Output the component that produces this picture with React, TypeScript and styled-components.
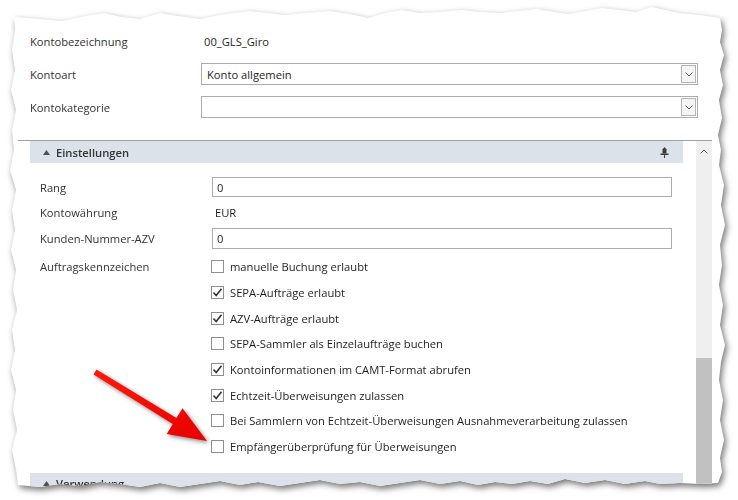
import React from 'react';
import styled, {createGlobalStyle} from 'styled-components';

const GlobalStyle = createGlobalStyle`
    html, body {
        margin: 0;
        padding: 0;
        background: #ffffff;
    }
    body {
        font-family: "Open Sans", "Liberation Sans", sans-serif;
        font-size: 11.2px;
        color: #333333;
    }
`;

// jagged "torn paper" outline, clockwise from top left
const EDGE = [
    [14, 17], [40, 19], [62, 21], [85, 16], [104, 13], [122, 17], [140, 19], [160, 13], [178, 16], [200, 19],
    [225, 14], [250, 11], [268, 13], [285, 15], [305, 13], [330, 11], [350, 14], [368, 18], [385, 13], [402, 10],
    [420, 13], [440, 12], [462, 10], [480, 12], [500, 13], [518, 11], [537, 9], [555, 12], [568, 14], [585, 11],
    [602, 8], [620, 10], [636, 12], [652, 7], [665, 10], [680, 13], [700, 15], [720, 18],
    [722, 30], [720, 42], [724, 55], [720, 70], [723, 85], [719, 100], [722, 118], [718, 135], [721, 150],
    [719, 165], [724, 185], [721, 205], [725, 225], [720, 245], [722, 265], [719, 285], [723, 305], [720, 325],
    [725, 345], [721, 362], [719, 380], [723, 400], [720, 420], [724, 440], [720, 458], [722, 472], [718, 483],
    [700, 484], [680, 483], [660, 484], [645, 481], [625, 484], [605, 480], [585, 483], [565, 479], [548, 484],
    [530, 481], [512, 484], [495, 482], [478, 485], [460, 481], [440, 484], [420, 480], [400, 483], [380, 486],
    [360, 482], [340, 484], [320, 480], [300, 483], [280, 486], [258, 482], [240, 485], [220, 481], [200, 484],
    [180, 487], [160, 483], [140, 487], [120, 484], [100, 482], [80, 486], [60, 484], [40, 487], [18, 485],
    [16, 470], [12, 450], [17, 430], [13, 410], [16, 390], [11, 370], [15, 350], [12, 330], [17, 310],
    [13, 290], [16, 270], [11, 250], [15, 230], [12, 210], [16, 190], [10, 170], [14, 150], [12, 130],
    [16, 110], [11, 90], [15, 70], [12, 50], [15, 30],
].map(([x, y]) => `${x}px ${y}px`).join(', ');

const Page = styled.div`
    position: relative;
    width: 738px;
    height: 500px;
    overflow: hidden;
`;

const PaperShadow = styled.div`
    width: 100%;
    height: 100%;
    filter: drop-shadow(2px 3px 3px rgba(0, 0, 0, 0.55));
`;

const Paper = styled.div`
    width: 100%;
    height: 100%;
    background: #ffffff;
    clip-path: polygon(${EDGE});
    display: flex;
    flex-direction: column;
`;

const TopForm = styled.div`
    display: grid;
    grid-template-columns: 171px 497px;
    grid-auto-rows: 22px;
    row-gap: 11px;
    padding: 30px 0 0 30px;
    height: 110px;
`;

const Label = styled.div`
    display: flex;
    align-items: center;
    color: #333333;
    white-space: nowrap;
`;

const StaticValue = styled.div`
    display: flex;
    align-items: center;
    padding-left: 3px;
    color: #1e1e1e;
`;

const Select = styled.div`
    display: flex;
    align-items: center;
    border: 1px solid #acacac;
    padding-left: 5px;
    color: #1e1e1e;
`;

const SelectText = styled.span`
    flex: 1;
`;

const DropButton = styled.div`
    width: 13px;
    height: 16px;
    margin-right: 1px;
    border: 1px solid #b4b4b4;
    background: #f4f4f4;
    display: flex;
    align-items: center;
    justify-content: center;
`;

const Separator = styled.div`
    margin: 0 26px 0 18px;
    border-top: 1px solid #a0a0a0;
`;

const Body = styled.div`
    flex: 1;
    display: flex;
    margin: 0 26px 0 18px;
    min-height: 0;
`;

const ScrollContent = styled.div`
    flex: 1;
    padding: 0 13px 0 12px;
    overflow: hidden;
`;

const SectionHeader = styled.div`
    height: 22px;
    background: #dbe2e9;
    display: flex;
    align-items: center;
    padding: 0 14px 0 13px;
    font-weight: 600;
    color: #333333;
`;

const HeaderTitle = styled.span`
    flex: 1;
    margin-left: 6px;
`;

const Settings = styled.div`
    display: grid;
    grid-template-columns: 172px 460px;
    padding: 14px 0 13px 10px;
`;

const TextBox = styled.div<{$h: number}>`
    height: ${p => p.$h}px;
    box-sizing: border-box;
    border: 1px solid #acacac;
    display: flex;
    align-items: center;
    padding-left: 4px;
    color: #1e1e1e;
`;

const PlainRow = styled.div<{$h: number}>`
    height: ${p => p.$h}px;
    display: flex;
    align-items: center;
`;

const CheckList = styled.div`
    display: flex;
    flex-direction: column;
    margin-top: 5px;
`;

const KennLabel = styled(Label)`
    align-items: flex-start;
    margin-top: 5px;
    height: 25.7px;
    line-height: 25.7px;
`;

const CheckRow = styled.label`
    height: 25.7px;
    display: flex;
    align-items: center;
    gap: 6px;
    color: #1e1e1e;
    white-space: nowrap;
`;

const Box = styled.span`
    width: 13px;
    height: 13px;
    box-sizing: border-box;
    border: 1px solid #8e8e8e;
    background: #ffffff;
    margin-left: -1px;
    display: flex;
    align-items: center;
    justify-content: center;
`;

const ScrollBar = styled.div`
    width: 16px;
    background: #efefef;
    display: flex;
    flex-direction: column;
`;

const ScrollArrow = styled.div`
    height: 20px;
    display: flex;
    align-items: center;
    justify-content: center;
`;

const ScrollThumb = styled.div`
    margin-top: 197px;
    flex: 1;
    background: #c1c1c1;
`;

const ArrowLayer = styled.svg`
    position: absolute;
    left: 0;
    top: 0;
    pointer-events: none;
    filter: drop-shadow(2px 2px 2px rgba(0, 0, 0, 0.45));
`;

const Chevron = ({up}: {up?: boolean}) => (
    <svg width="8" height="5" viewBox="0 0 8 5">
        <path d={up ? 'M0.5 4.5 L4 1 L7.5 4.5' : 'M0.5 0.5 L4 4 L7.5 0.5'} fill="none" stroke="#5a5a5a" strokeWidth="1"/>
    </svg>
);

const Check = () => (
    <svg width="11" height="11" viewBox="0 0 11 11">
        <path d="M1.5 5.5 L4.2 8.5 L9.5 1.8" fill="none" stroke="#333333" strokeWidth="1.6"/>
    </svg>
);

const PinIcon = () => (
    <svg width="9" height="11" viewBox="0 0 9 11">
        <path d="M4.5 0 L7 3 L2 3 Z" fill="#3c3c3c"/>
        <rect x="2.5" y="3" width="4" height="3.5" fill="#3c3c3c"/>
        <rect x="0.5" y="6.5" width="8" height="1.5" fill="#3c3c3c"/>
        <rect x="4" y="8" width="1" height="3" fill="#3c3c3c"/>
    </svg>
);

const Triangle = () => (
    <svg width="7" height="5" viewBox="0 0 7 5">
        <path d="M3.5 0 L7 5 L0 5 Z" fill="#505050"/>
    </svg>
);

const options: {text: string; checked: boolean}[] = [
    {text: 'manuelle Buchung erlaubt', checked: false},
    {text: 'SEPA-Aufträge erlaubt', checked: true},
    {text: 'AZV-Aufträge erlaubt', checked: true},
    {text: 'SEPA-Sammler als Einzelaufträge buchen', checked: false},
    {text: 'Kontoinformationen im CAMT-Format abrufen', checked: true},
    {text: 'Echtzeit-Überweisungen zulassen', checked: true},
    {text: 'Bei Sammlern von Echtzeit-Überweisungen Ausnahmeverarbeitung zulassen', checked: false},
    {text: 'Empfängerüberprüfung für Überweisungen', checked: false},
];

export default function App() {
    return <Page>
        <GlobalStyle/>
        <PaperShadow>
            <Paper>
                <TopForm>
                    <Label>Kontobezeichnung</Label>
                    <StaticValue>00_GLS_Giro</StaticValue>
                    <Label>Kontoart</Label>
                    <Select>
                        <SelectText>Konto allgemein</SelectText>
                        <DropButton><Chevron/></DropButton>
                    </Select>
                    <Label>Kontokategorie</Label>
                    <Select>
                        <SelectText/>
                        <DropButton><Chevron/></DropButton>
                    </Select>
                </TopForm>
                <Separator/>
                <Body>
                    <ScrollContent>
                        <SectionHeader>
                            <Triangle/>
                            <HeaderTitle>Einstellungen</HeaderTitle>
                            <PinIcon/>
                        </SectionHeader>
                        <Settings>
                            <Label>Rang</Label>
                            <TextBox $h={20}>0</TextBox>
                            <Label>Kontowährung</Label>
                            <PlainRow $h={31}><StaticValue>EUR</StaticValue></PlainRow>
                            <Label>Kunden-Nummer-AZV</Label>
                            <TextBox $h={21}>0</TextBox>
                            <KennLabel>Auftragskennzeichen</KennLabel>
                            <CheckList>
                                {options.map(o => (
                                    <CheckRow key={o.text}>
                                        <Box>{o.checked && <Check/>}</Box>
                                        {o.text}
                                    </CheckRow>
                                ))}
                            </CheckList>
                        </Settings>
                        <SectionHeader>
                            <Triangle/>
                            <HeaderTitle>Verwendung</HeaderTitle>
                        </SectionHeader>
                    </ScrollContent>
                    <ScrollBar>
                        <ScrollArrow><Chevron up/></ScrollArrow>
                        <ScrollThumb/>
                    </ScrollBar>
                </Body>
            </Paper>
        </PaperShadow>
        <ArrowLayer width="738" height="500" viewBox="0 0 738 500">
            <defs>
                <linearGradient id="red" x1="0" y1="0" x2="1" y2="1">
                    <stop offset="0" stopColor="#ff1a0a"/>
                    <stop offset="1" stopColor="#e60000"/>
                </linearGradient>
            </defs>
            <path d="M96.5 369.5 L176.4 418.1 L182.5 408.3 L207 441 L166.7 433.9 L172.8 424.1 L93.5 374.5 Z" fill="url(#red)"/>
        </ArrowLayer>
    </Page>;
}
